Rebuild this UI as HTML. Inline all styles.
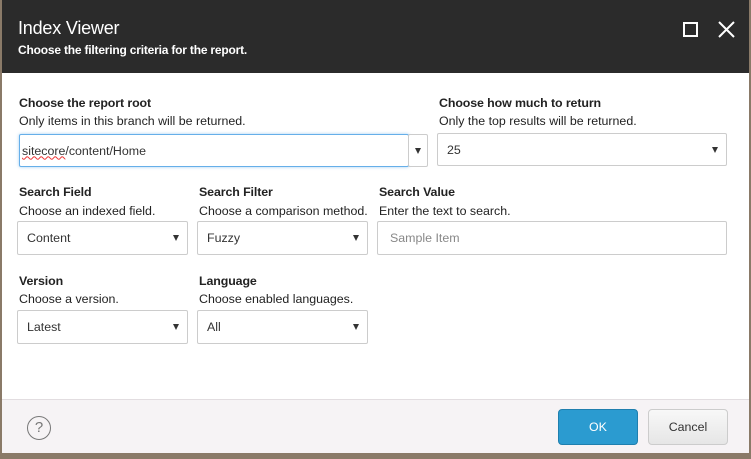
<!DOCTYPE html>
<html><head><style>
*{box-sizing:border-box;margin:0;padding:0}
body{width:751px;height:459px;overflow:hidden;background:#8a7a68;font-family:"Liberation Sans",Arial,sans-serif;position:relative}
.dlg{position:absolute;left:2px;top:0;width:747px;height:453px;background:#fff}
.hdr{position:absolute;left:0;top:0;width:747px;height:73px;background:#2b2b2b;color:#fff}
.hdr h1{position:absolute;left:16px;top:18px;font-size:18px;font-weight:normal;letter-spacing:-0.2px}
.hdr p{position:absolute;left:16px;top:43px;font-size:12px;font-weight:bold;letter-spacing:-0.2px}
.t{position:absolute;font-size:12.4px;color:#222;white-space:nowrap}
.b{font-weight:bold;color:#222;letter-spacing:-0.1px}
.box{position:absolute;border:1px solid #ccc;border-radius:2px;background:#fff;font-size:12.4px;color:#333;padding-left:9px;display:flex;align-items:center}
.arr{position:absolute;right:8px;top:50%;margin-top:-3px;width:0;height:0;border-left:3px solid transparent;border-right:3px solid transparent;border-top:6px solid #333}
.foot{position:absolute;left:0;top:399px;width:747px;height:54px;background:#f6f3f5;border-top:1px solid #e2dde0}
.btn{position:absolute;top:9px;height:36px;border-radius:4px;font-size:12.4px;display:flex;align-items:center;justify-content:center}
</style></head><body>
<div class="dlg">
<div class="hdr"><h1>Index Viewer</h1><p>Choose the filtering criteria for the report.</p>
<div style="position:absolute;left:681px;top:22px;width:15px;height:15px;border:2px solid #fff"></div>
<svg style="position:absolute;left:716px;top:21px" width="17" height="17"><path d="M1 1L16 16M16 1L1 16" stroke="#fff" stroke-width="2"/></svg>
</div>
<div class="t b" style="left:17px;top:96px">Choose the report root</div>
<div class="t" style="left:17px;top:114px">Only items in this branch will be returned.</div>
<div class="t b" style="left:437px;top:96px">Choose how much to return</div>
<div class="t" style="left:437px;top:114px">Only the top results will be returned.</div>
<div class="box" style="left:17px;top:134px;width:390px;height:33px;border-color:#66afe9;box-shadow:0 0 3px rgba(102,175,233,.6);padding-left:2px"><span style="text-decoration:underline wavy #e33;text-decoration-thickness:1px">sitecore</span>/content/Home</div>
<div class="box" style="left:406px;top:134px;width:20px;height:33px"><div class="arr" style="right:6px"></div></div>
<div class="box" style="left:435px;top:133px;width:290px;height:33px">25<div class="arr"></div></div>

<div class="t b" style="left:17px;top:185px">Search Field</div>
<div class="t" style="left:17px;top:204px">Choose an indexed field.</div>
<div class="t b" style="left:197px;top:185px">Search Filter</div>
<div class="t" style="left:197px;top:204px">Choose a comparison method.</div>
<div class="t b" style="left:377px;top:185px">Search Value</div>
<div class="t" style="left:377px;top:204px">Enter the text to search.</div>
<div class="box" style="left:15px;top:221px;width:171px;height:34px">Content<div class="arr"></div></div>
<div class="box" style="left:195px;top:221px;width:171px;height:34px">Fuzzy<div class="arr"></div></div>
<div class="box" style="left:375px;top:221px;width:350px;height:34px;color:#888;padding-left:12px">Sample Item</div>

<div class="t b" style="left:17px;top:274px">Version</div>
<div class="t" style="left:17px;top:292px">Choose a version.</div>
<div class="t b" style="left:197px;top:274px">Language</div>
<div class="t" style="left:197px;top:292px">Choose enabled languages.</div>
<div class="box" style="left:15px;top:310px;width:171px;height:34px">Latest<div class="arr"></div></div>
<div class="box" style="left:195px;top:310px;width:171px;height:34px">All<div class="arr"></div></div>

<div class="foot">
<div style="position:absolute;left:25px;top:16px;width:24px;height:24px;border:1.5px solid #777;border-radius:50%;color:#777;font-size:15px;text-align:center;line-height:21px">?</div>
<div class="btn" style="left:556px;width:80px;background:#2b9bd0;border:1px solid #1f7fae;color:#fff">OK</div>
<div class="btn" style="left:646px;width:80px;background:linear-gradient(#f8f8f8,#e6e6e6);border:1px solid #ccc;color:#333">Cancel</div>
</div>
</div>
</body></html>
